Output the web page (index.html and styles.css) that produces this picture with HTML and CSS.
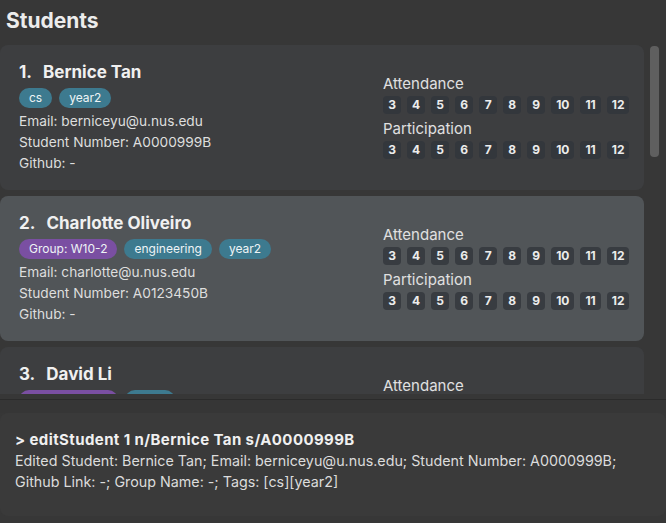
FILE: index.html
```html
<!DOCTYPE html>
<html>
<head>
<meta charset="utf-8">
<link rel="stylesheet" href="styles.css">
</head>
<body>
<div class="app">
  <div class="title">Students</div>
  <div class="list-wrap">
    <div class="list">
      <div class="card">
        <div class="info">
          <div class="name"><span class="idx">1.</span>Bernice Tan</div>
          <div class="tags"><span class="tag">cs</span><span class="tag">year2</span></div>
          <div class="line">Email: berniceyu@u.nus.edu</div>
          <div class="line">Student Number: A0000999B</div>
          <div class="line">Github: -</div>
        </div>
        <div class="weeks">
          <div class="label">Attendance</div>
          <div class="boxes"><span>3</span><span>4</span><span>5</span><span>6</span><span>7</span><span>8</span><span>9</span><span>10</span><span>11</span><span>12</span></div>
          <div class="label second">Participation</div>
          <div class="boxes"><span>3</span><span>4</span><span>5</span><span>6</span><span>7</span><span>8</span><span>9</span><span>10</span><span>11</span><span>12</span></div>
        </div>
      </div>
      <div class="card selected">
        <div class="info">
          <div class="name"><span class="idx">2.</span>Charlotte Oliveiro</div>
          <div class="tags"><span class="tag group">Group: W10-2</span><span class="tag">engineering</span><span class="tag">year2</span></div>
          <div class="line">Email: charlotte@u.nus.edu</div>
          <div class="line">Student Number: A0123450B</div>
          <div class="line">Github: -</div>
        </div>
        <div class="weeks">
          <div class="label">Attendance</div>
          <div class="boxes"><span>3</span><span>4</span><span>5</span><span>6</span><span>7</span><span>8</span><span>9</span><span>10</span><span>11</span><span>12</span></div>
          <div class="label second">Participation</div>
          <div class="boxes"><span>3</span><span>4</span><span>5</span><span>6</span><span>7</span><span>8</span><span>9</span><span>10</span><span>11</span><span>12</span></div>
        </div>
      </div>
      <div class="card">
        <div class="info">
          <div class="name"><span class="idx">3.</span>David Li</div>
          <div class="tags"><span class="tag group">Group: W10-3</span><span class="tag">year1</span></div>
          <div class="line">Email: david@u.nus.edu</div>
          <div class="line">Student Number: A0123456C</div>
          <div class="line">Github: -</div>
        </div>
        <div class="weeks">
          <div class="label">Attendance</div>
          <div class="boxes"><span>3</span><span>4</span><span>5</span><span>6</span><span>7</span><span>8</span><span>9</span><span>10</span><span>11</span><span>12</span></div>
        </div>
      </div>
    </div>
    <div class="scrollbar"><div class="thumb"></div></div>
  </div>
  <div class="divider"></div>
  <div class="result">
    <div class="cmd">&gt; editStudent 1 n/Bernice Tan s/A0000999B</div>
    <div class="out">Edited Student: Bernice Tan; Email: berniceyu@u.nus.edu; Student Number: A0000999B;</div>
    <div class="out">Github Link: -; Group Name: -; Tags: [cs][year2]</div>
  </div>
</div>
</body>
</html>
```

FILE: styles.css
```css
* { box-sizing: border-box; }
html, body { margin: 0; padding: 0; }
body {
  background: #373737;
  font-family: Inter, "Noto Sans", sans-serif;
  color: #e2e2e2;
  width: 666px;
  height: 523px;
  overflow: hidden;
}
.app { display: flex; flex-direction: column; }
.title {
  height: 45px;
  padding: 9px 6px 0;
  font-size: 21px;
  font-weight: 700;
  line-height: 24px;
  color: #ececec;
}
.list-wrap {
  display: flex;
  height: 355px;
  padding-bottom: 5px;
  overflow: hidden;
  border-bottom: 1px solid #2b2b2b;
}
.list {
  width: 644px;
  flex: none;
  display: flex;
  flex-direction: column;
  gap: 6px;
  overflow: hidden;
}
.card {
  flex: none;
  height: 145px;
  display: flex;
  background: #3d3e40;
  border-radius: 8px;
  padding: 17px 15px 16px 19px;
}
.card.selected { background: #515558; }
.info { width: 364px; flex: none; }
.name {
  font-size: 17px;
  font-weight: 700;
  line-height: 20px;
  color: #f0f0f0;
}
.idx { margin-right: 11px; }
.tags { display: flex; gap: 7px; margin-top: 6px; }
.tag {
  height: 20px;
  line-height: 20px;
  padding: 0 10px;
  border-radius: 10px;
  background: #3d7a8f;
  font-size: 12px;
  color: #eef4f6;
}
.tag.group { background: #7a4fa2; }
.line {
  font-size: 13.7px;
  line-height: 21px;
  color: #dedede;
}
.tags + .line { margin-top: 3px; }
.weeks { flex: none; padding-top: 13px; }
.label {
  font-size: 15px;
  line-height: 18px;
  color: #e0e0e0;
}
.label.second { margin-top: 6px; }
.boxes { display: flex; gap: 6px; margin-top: 3px; }
.boxes span {
  height: 18px;
  line-height: 18px;
  padding: 0 5px;
  border-radius: 4px;
  background: #33373c;
  font-size: 12px;
  font-weight: 700;
  color: #ececec;
  min-width: 18px;
  text-align: center;
}
.selected .boxes span { background: #383c41; }
.scrollbar { flex: 1; padding: 1px 7px 0 6px; }
.thumb { width: 9px; height: 111px; border-radius: 4px; background: #5f5f5f; }
.divider { height: 13px; background: #363636; }
.result {
  height: 103px;
  background: #3a3a3a;
  border-radius: 8px;
  padding: 16px 15px;
}
.cmd {
  font-size: 15px;
  font-weight: 700;
  letter-spacing: 0.4px;
  line-height: 21px;
  color: #f0f0f0;
}
.out {
  font-size: 14.3px;
  line-height: 21px;
  color: #dcdcdc;
}
```
